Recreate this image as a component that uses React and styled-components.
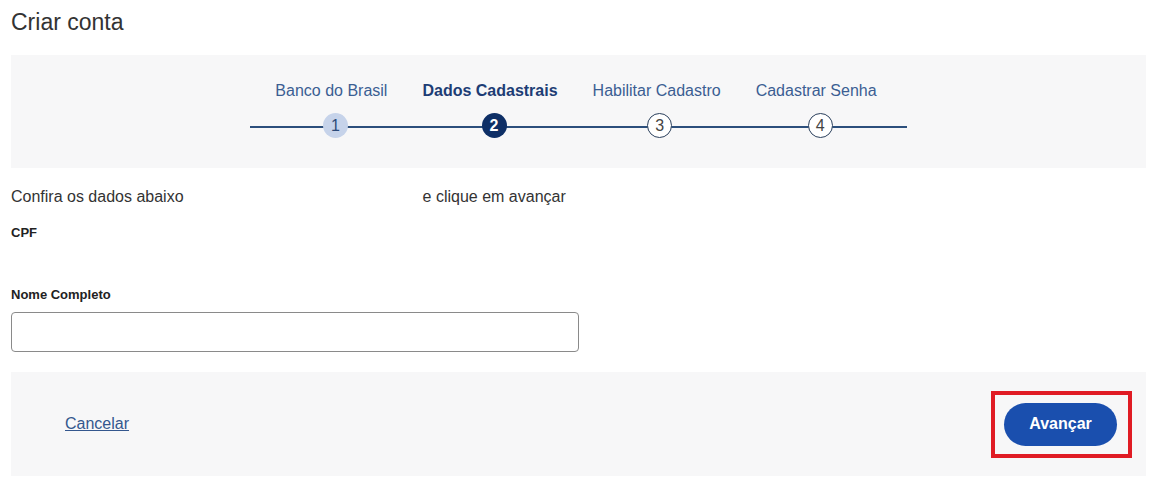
import React from "react";
import styled, { createGlobalStyle } from "styled-components";

const Global = createGlobalStyle`
  html, body { margin: 0; padding: 0; background: #fff; }
  body { font-family: "Liberation Sans", Arial, sans-serif; color: #333; }
  * { box-sizing: border-box; }
`;

const Page = styled.div`
  padding: 8px 4px 0 11px;
  display: flex;
  flex-direction: column;
`;

const Title = styled.h1`
  margin: 0;
  font-size: 23px;
  font-weight: 400;
  line-height: 29px;
  color: #333;
  height: 47px;
`;

const StepPanel = styled.div`
  background: #f7f7f8;
  height: 113px;
  display: flex;
  justify-content: center;
  padding-top: 25px;
`;

const Stepper = styled.ol`
  list-style: none;
  margin: 0;
  padding: 0 13px 0 8px;
  display: flex;
  position: relative;
  align-self: flex-start;
  &::before {
    content: "";
    position: absolute;
    left: 0;
    right: 0;
    top: 46px;
    height: 2px;
    background: #2c4f7c;
  }
`;

const Step = styled.li`
  display: flex;
  flex-direction: column;
  align-items: center;
  padding: 0 17.5px;
  position: relative;
`;

const StepLabel = styled.span`
  font-size: 16px;
  line-height: 22px;
  white-space: nowrap;
  color: ${(p) => (p.$active ? "#1d3d75" : "#3b5e93")};
  font-weight: ${(p) => (p.$active ? 700 : 400)};
`;

const Circle = styled.span`
  margin-top: 11px;
  margin-left: ${(p) => p.$shift || 0}px;
  width: 25px;
  height: 25px;
  border-radius: 50%;
  display: flex;
  align-items: center;
  justify-content: center;
  font-size: 16px;
  position: relative;
  z-index: 1;
  ${(p) =>
    p.$state === "done"
      ? "background:#c6d3ea;color:#2c4a78;"
      : p.$state === "active"
      ? "background:#0e2f66;color:#fff;font-weight:700;"
      : "background:#fff;color:#444;border:1px solid #2a3f5c;"}
`;

const Content = styled.div`
  display: flex;
  flex-direction: column;
`;

const Intro = styled.p`
  margin: 19px 0 0;
  font-size: 16px;
  line-height: 20px;
  color: #333;
`;

const Redacted = styled.span`
  display: inline-block;
  width: 239px;
`;

const FieldLabel = styled.label`
  display: block;
  font-size: 13px;
  font-weight: 700;
  color: #222;
  line-height: 16px;
  margin-top: ${(p) => p.$top}px;
`;

const Input = styled.input`
  display: block;
  width: 568px;
  height: 40px;
  margin-top: 9px;
  border: 1px solid #8a8a8a;
  border-radius: 4px;
  background: #fff;
  font-size: 16px;
  padding: 0 12px;
  font-family: inherit;
`;

const Footer = styled.div`
  margin-top: 20px;
  background: #f7f7f8;
  height: 104px;
  display: flex;
  align-items: center;
  justify-content: space-between;
  padding: 0 14px 0 54px;
`;

const CancelLink = styled.a`
  font-size: 16px;
  color: #34578e;
  text-decoration: underline;
  cursor: pointer;
`;

const Highlight = styled.div`
  border: 4px solid #e01b24;
  padding: 8px 11px 8px 9px;
  display: flex;
`;

const PrimaryButton = styled.button`
  width: 113px;
  height: 43px;
  border: none;
  border-radius: 22px;
  background: #1a4fae;
  color: #fff;
  font-family: inherit;
  font-size: 16px;
  font-weight: 700;
  cursor: pointer;
`;

const steps = [
  { label: "Banco do Brasil", n: 1, state: "done", shift: 8 },
  { label: "Dados Cadastrais", n: 2, state: "active", shift: 8 },
  { label: "Habilitar Cadastro", n: 3, state: "todo", shift: 6 },
  { label: "Cadastrar Senha", n: 4, state: "todo", shift: 8 },
];

export default function App() {
  return (
    <>
      <Global />
      <Page>
        <Title>Criar conta</Title>
        <StepPanel>
          <Stepper>
            {steps.map((s) => (
              <Step key={s.n}>
                <StepLabel $active={s.state === "active"}>{s.label}</StepLabel>
                <Circle $state={s.state} $shift={s.shift}>{s.n}</Circle>
              </Step>
            ))}
          </Stepper>
        </StepPanel>
        <Content>
          <Intro>
            Confira os dados abaixo<Redacted />e clique em avançar
          </Intro>
          <FieldLabel $top={18}>CPF</FieldLabel>
          <FieldLabel $top={46}>Nome Completo</FieldLabel>
          <Input type="text" />
        </Content>
        <Footer>
          <CancelLink>Cancelar</CancelLink>
          <Highlight>
            <PrimaryButton>Avançar</PrimaryButton>
          </Highlight>
        </Footer>
      </Page>
    </>
  );
}
